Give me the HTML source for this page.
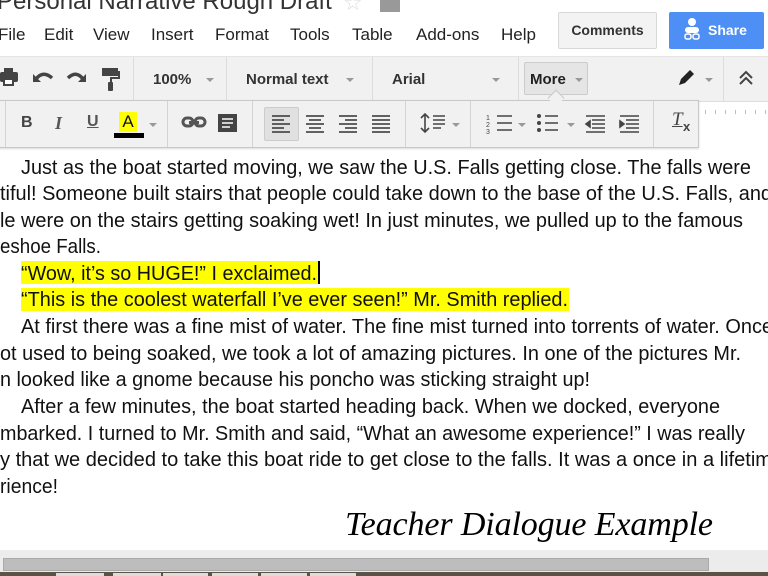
<!DOCTYPE html>
<html><head><style>
*{margin:0;padding:0;box-sizing:border-box}
body{width:768px;height:576px;overflow:hidden;background:#fff;position:relative;font-family:"Liberation Sans",Arial,sans-serif}
.a{position:absolute}
.menu span{position:absolute;top:25px;font-size:17px;color:#222}
.sep{position:absolute;width:1px;background:#dcdcdc}
.tb{font-size:15px;font-weight:bold;color:#333;position:absolute}
.dd{position:absolute;width:0;height:0;border-left:4px solid transparent;border-right:4px solid transparent;border-top:4px solid #999}
</style></head><body>
<div class="a" style="left:-3px;top:-12px;font-size:24px;color:#333;white-space:nowrap">Personal Narrative Rough Draft</div>
<div class="a" style="left:343px;top:-10px;font-size:22px;color:#ddd">☆</div>
<div class="a" style="left:380px;top:0;width:20px;height:12px;background:#999"></div>
<div class="menu">
<span style="left:-2px">File</span><span style="left:44px">Edit</span><span style="left:93px">View</span><span style="left:151px">Insert</span><span style="left:215px">Format</span><span style="left:290px">Tools</span><span style="left:352px">Table</span><span style="left:416px">Add-ons</span><span style="left:501px">Help</span>
</div>
<div class="a" style="left:558px;top:12px;width:99px;height:37px;border:1px solid #d8d8d8;border-radius:2px;background:#f3f3f3;font-size:14px;font-weight:bold;color:#333;text-align:center;line-height:35px">Comments</div>
<div class="a" style="left:669px;top:12px;width:95px;height:37px;border-radius:2px;background:#4d8ff5;font-size:14px;font-weight:bold;color:#fff;line-height:37px;padding-left:39px">Share</div>
<svg class="a" style="left:683px;top:17px" width="20" height="26"><circle cx="9" cy="5" r="4" fill="#fff"/><rect x="2" y="10" width="14" height="6" rx="3" fill="#fff"/><rect x="2" y="17" width="6" height="5" rx="2" fill="none" stroke="#fff" stroke-width="1.5"/><rect x="10" y="17" width="6" height="5" rx="2" fill="none" stroke="#fff" stroke-width="1.5"/></svg>

<div class="a" style="left:0;top:56px;width:768px;height:46px;background:#f1f1f1;border-top:1px solid #e5e5e5;border-bottom:1px solid #ddd"></div>
<div class="sep" style="left:133px;top:57px;height:44px"></div>
<div class="sep" style="left:226px;top:57px;height:44px"></div>
<div class="sep" style="left:372px;top:57px;height:44px"></div>
<div class="sep" style="left:518px;top:57px;height:44px"></div>
<div class="sep" style="left:723px;top:57px;height:44px"></div>
<svg class="a" style="left:0;top:66px" width="125" height="26">
<rect x="0" y="6" width="18" height="10" rx="2" fill="#444"/><rect x="4" y="2" width="9" height="5" fill="#444"/><rect x="4" y="13" width="9" height="6" fill="#fff" stroke="#444" stroke-width="2"/>
<path d="M36 13 Q43 4 52 12" stroke="#444" stroke-width="3.5" fill="none"/><path d="M33 8 L33 16 L41 16Z" fill="#444"/>
<path d="M68 12 Q76 4 83 13" stroke="#444" stroke-width="3.5" fill="none"/><path d="M86 8 L86 16 L78 16Z" fill="#444"/>
<rect x="102" y="2" width="16" height="8" fill="#444"/><rect x="118" y="5" width="2" height="7" fill="#444"/><path d="M120 12 L111 12 L111 16" stroke="#444" stroke-width="2" fill="none"/><rect x="108" y="16" width="5" height="9" rx="1" fill="#444"/>
</svg>
<div class="tb" style="left:153px;top:71px">100%</div><div class="dd" style="left:206px;top:78px"></div>
<div class="tb" style="left:246px;top:71px">Normal text</div><div class="dd" style="left:346px;top:78px"></div>
<div class="tb" style="left:392px;top:71px">Arial</div><div class="dd" style="left:492px;top:78px"></div>
<div class="a" style="left:524px;top:62px;width:64px;height:33px;background:#e5e5e5;border:1px solid #ccc;border-radius:2px"></div>
<div class="tb" style="left:530px;top:71px;color:#222">More</div><div class="dd" style="left:575px;top:78px"></div>
<svg class="a" style="left:676px;top:68px" width="20" height="20"><path d="M3 17 L5 11 L14 2 L18 6 L9 15Z" fill="#222"/></svg><div class="dd" style="left:705px;top:78px"></div>
<svg class="a" style="left:738px;top:70px" width="16" height="16"><path d="M2 8 L8 2 L14 8 M2 14 L8 8 L14 14" stroke="#444" stroke-width="2" fill="none"/></svg>
<div class="a" style="left:699px;top:102px;width:69px;height:18px;background:#fff"></div>
<div class="a" style="left:705px;top:110px;width:63px;height:4px;background:repeating-linear-gradient(90deg,#bbb 0 1px,transparent 1px 10px)"></div>
<div class="a" style="left:-2px;top:100px;width:701px;height:48px;background:#f1f1f1;border:1px solid #c8c8c8;box-shadow:0 1px 2px rgba(0,0,0,.15)"></div>
<div class="a" style="top:92px;width:12px;height:12px;background:#f1f1f1;border-left:1px solid #c8c8c8;border-top:1px solid #c8c8c8;transform:rotate(45deg);left:550px"></div>
<div class="sep" style="left:5px;top:101px;height:46px;background:#d4d4d4"></div>
<div class="sep" style="left:167px;top:101px;height:46px;background:#d4d4d4"></div>
<div class="sep" style="left:252px;top:101px;height:46px;background:#d4d4d4"></div>
<div class="sep" style="left:405px;top:101px;height:46px;background:#d4d4d4"></div>
<div class="sep" style="left:470px;top:101px;height:46px;background:#d4d4d4"></div>
<div class="sep" style="left:653px;top:101px;height:46px;background:#d4d4d4"></div>
<div class="a" style="left:21px;top:114px;font-size:16px;font-weight:bold;color:#444">B</div>
<div class="a" style="left:55px;top:113px;font-size:18px;font-style:italic;font-weight:bold;color:#555;font-family:'Liberation Serif',serif">I</div>
<div class="a" style="left:87px;top:113px;font-size:16px;font-weight:bold;color:#555;text-decoration:underline">U</div>
<div class="a" style="left:119px;top:112px;width:18px;height:20px;background:#ffff00;font-size:17px;color:#111;text-align:center;line-height:20px">A</div>
<div class="a" style="left:114px;top:133px;width:30px;height:5px;background:#000"></div>
<div class="dd" style="left:149px;top:123px"></div>
<svg class="a" style="left:180px;top:112px" width="62" height="22">
<rect x="3" y="6" width="10" height="8" rx="4" fill="none" stroke="#555" stroke-width="3"/><rect x="15" y="6" width="10" height="8" rx="4" fill="none" stroke="#555" stroke-width="3"/><rect x="9" y="9" width="10" height="3" fill="#555"/>
<path d="M38 2 L57 2 L57 20 L38 20 L38 6Z" fill="#444"/><path d="M42 7 H53 M42 11 H53 M42 15 H50" stroke="#fff" stroke-width="1.5"/>
</svg>
<div class="a" style="left:264px;top:107px;width:35px;height:34px;background:#e0e0e0;border:1px solid #ccc;border-radius:2px"></div>
<svg class="a" style="left:270px;top:114px" width="125" height="20" stroke="#333" stroke-width="1.6">
<path d="M2 2H20M2 6H14M2 10H20M2 14H14M2 18H20"/>
<path d="M36 2H54M39 6H51M36 10H54M39 14H51M36 18H54"/>
<path d="M69 2H87M75 6H87M69 10H87M75 14H87M69 18H87"/>
<path d="M102 2H120M102 6H120M102 10H120M102 14H120M102 18H120"/>
</svg>
<svg class="a" style="left:420px;top:112px" width="240" height="24" stroke="#444" stroke-width="1.6" fill="none">
<path d="M5 2V20M1 6L5 2L9 6M1 16L5 20L9 16"/><path d="M13 4H25M13 8H25M13 12H25M13 16H21"/>
<path d="M77 4H92M77 11H92M77 18H92"/><text x="66" y="8" font-size="7" fill="#444" stroke="none">1</text><text x="66" y="15" font-size="7" fill="#444" stroke="none">2</text><text x="66" y="22" font-size="7" fill="#444" stroke="none">3</text>
<circle cx="119" cy="4" r="2" fill="#444" stroke="none"/><circle cx="119" cy="11" r="2" fill="#444" stroke="none"/><circle cx="119" cy="18" r="2" fill="#444" stroke="none"/><path d="M125 4H138M125 11H138M125 18H138"/>
<path d="M166 4H185M172 8H185M172 12H185M172 16H185M166 20H185"/><path d="M170 9L166 12L170 15Z" fill="#444"/>
<path d="M200 4H219M206 8H219M206 12H219M206 16H219M200 20H219"/><path d="M200 9L204 12L200 15Z" fill="#444"/>
</svg>
<div class="dd" style="left:452px;top:123px"></div><div class="dd" style="left:518px;top:123px"></div><div class="dd" style="left:567px;top:123px"></div>
<div class="a" style="left:672px;top:109px;font-size:19px;font-style:italic;color:#444;font-family:'Liberation Serif',serif;text-decoration:underline">T</div>
<div class="a" style="left:683px;top:119px;font-size:13px;font-weight:bold;color:#444">x</div>

<div class="a" style="left:21px;top:261px;width:298px;height:23px;background:#ffff00"></div>
<div class="a" style="left:21px;top:288px;width:548px;height:23px;background:#ffff00"></div>
<div class="a" style="left:318px;top:261px;width:2px;height:23px;background:#000"></div>
<svg class="a" style="left:0;top:0" width="768" height="576" font-family="Liberation Sans, Arial, sans-serif" font-size="20.5" fill="#111">
<text x="21" y="174" textLength="730" lengthAdjust="spacingAndGlyphs">Just as the boat started moving, we saw the U.S. Falls getting close. The falls were</text>
<text x="0" y="200" textLength="772" lengthAdjust="spacingAndGlyphs">tiful! Someone built stairs that people could take down to the base of the U.S. Falls, and</text>
<text x="0" y="227" textLength="743" lengthAdjust="spacingAndGlyphs">le were on the stairs getting soaking wet! In just minutes, we pulled up to the famous</text>
<text x="0" y="253" textLength="101" lengthAdjust="spacingAndGlyphs">eshoe Falls.</text>
<text x="21" y="280" textLength="296" lengthAdjust="spacingAndGlyphs">“Wow, it’s so HUGE!” I exclaimed.</text>
<text x="21" y="306" textLength="547" lengthAdjust="spacingAndGlyphs">“This is the coolest waterfall I’ve ever seen!” Mr. Smith replied.</text>
<text x="21" y="333" textLength="752" lengthAdjust="spacingAndGlyphs">At first there was a fine mist of water. The fine mist turned into torrents of water. Once</text>
<text x="0" y="360" textLength="741" lengthAdjust="spacingAndGlyphs">ot used to being soaked, we took a lot of amazing pictures. In one of the pictures Mr.</text>
<text x="0" y="386" textLength="590" lengthAdjust="spacingAndGlyphs">n looked like a gnome because his poncho was sticking straight up!</text>
<text x="21" y="413" textLength="699" lengthAdjust="spacingAndGlyphs">After a few minutes, the boat started heading back. When we docked, everyone</text>
<text x="0" y="440" textLength="745" lengthAdjust="spacingAndGlyphs">mbarked. I turned to Mr. Smith and said, “What an awesome experience!” I was really</text>
<text x="0" y="466" textLength="772" lengthAdjust="spacingAndGlyphs">y that we decided to take this boat ride to get close to the falls. It was a once in a lifetim</text>
<text x="0" y="493" textLength="58" lengthAdjust="spacingAndGlyphs">rience!</text>
<text x="345" y="535" textLength="368" font-family="Liberation Serif, serif" font-style="italic" font-size="34" fill="#000">Teacher Dialogue Example</text>
</svg>
<div class="a" style="left:0;top:550px;width:768px;height:22px;background:#ececec"></div>
<div class="a" style="left:3px;top:558px;width:706px;height:13px;background:#bdbdbd;border:1px solid #aaa"></div>
<div class="a" style="left:0;top:572px;width:768px;height:4px;background:#5a5347"></div>
<div class="a" style="left:56px;top:573px;width:48px;height:3px;background:#ddd"></div>
<div class="a" style="left:113px;top:573px;width:48px;height:3px;background:#ddd"></div>
<div class="a" style="left:163px;top:573px;width:45px;height:3px;background:#ddd"></div>
<div class="a" style="left:212px;top:573px;width:46px;height:3px;background:#ddd"></div>
<div class="a" style="left:261px;top:573px;width:46px;height:3px;background:#ddd"></div>
<div class="a" style="left:310px;top:573px;width:46px;height:3px;background:#ddd"></div>
</body></html>
